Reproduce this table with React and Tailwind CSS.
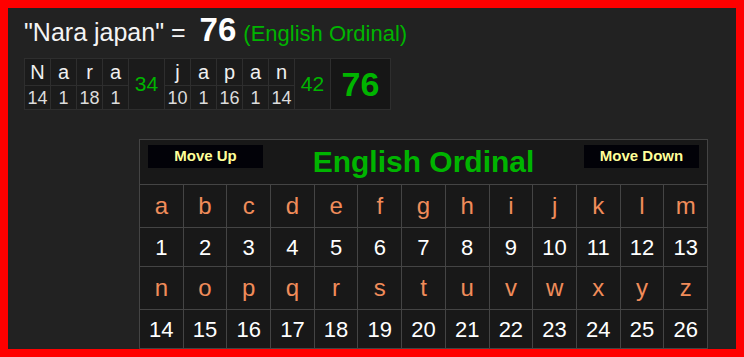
import React from "react";

const word1 = [["N", 14], ["a", 1], ["r", 18], ["a", 1]];
const word2 = [["j", 10], ["a", 1], ["p", 16], ["a", 1], ["n", 14]];
const letters = "abcdefghijklmnopqrstuvwxyz".split("");

function LetterCol({ l, n }) {
  return (
    <div className="flex w-[26px] flex-col border-r border-[#2e2e2e]">
      <div className="flex h-[27px] items-center justify-center border-b border-[#2e2e2e] text-[20px] text-[#f0f0f0]">
        {l}
      </div>
      <div className="flex h-[24px] items-center justify-center text-[18px] text-[#dcdcdc]">{n}</div>
    </div>
  );
}

function SumCol({ v }) {
  return (
    <div className="flex w-[36px] items-center justify-center border-r border-[#2e2e2e] text-[21px] text-[#00b400]">
      {v}
    </div>
  );
}

export default function App() {
  const rows = [letters.slice(0, 13), letters.slice(13)];
  return (
    <div
      className="box-border h-[357px] w-[744px] overflow-hidden border-8 border-[#ff0000] bg-[#222222]"
      style={{ fontFamily: '"Liberation Sans", Arial, sans-serif' }}
    >
      <div className="pl-[16px] pt-[3px]">
        <div className="flex items-baseline leading-[38px]">
          <span className="text-[25px] text-[#f4f4f4]">"Nara japan" =</span>
          <span className="ml-[14px] text-[33px] font-bold text-white">76</span>
          <span className="ml-[7px] text-[22px] text-[#00b400]">(English Ordinal)</span>
        </div>
        <div className="mt-[5px] flex h-[52px] w-fit border border-[#2e2e2e] bg-[#1b1b1b]">
          {word1.map(([l, n], i) => (
            <LetterCol key={"a" + i} l={l} n={n} />
          ))}
          <SumCol v={34} />
          {word2.map(([l, n], i) => (
            <LetterCol key={"b" + i} l={l} n={n} />
          ))}
          <SumCol v={42} />
          <div className="flex w-[59px] items-center justify-center bg-[#161616] text-[34px] font-bold text-[#00b400]">
            76
          </div>
        </div>

        <div className="ml-[115px] mt-[29px] w-[569px] border border-[#444444] bg-[#444444]">
          <div className="flex h-[44px] items-start justify-between bg-[#181818] px-[8px]">
            <div className="mt-[5px] flex h-[23px] w-[115px] items-center justify-center bg-[#020208] text-[15px] font-bold text-[#ffff99]">
              Move Up
            </div>
            <div className="self-center text-[30px] font-bold leading-none text-[#00b400]">English Ordinal</div>
            <div className="mt-[5px] flex h-[23px] w-[115px] items-center justify-center bg-[#020208] text-[15px] font-bold text-[#ffff99]">
              Move Down
            </div>
          </div>
          <div className="mt-px grid grid-cols-[repeat(13,minmax(0,1fr))] gap-px">
            {rows.map((row, ri) => (
              <React.Fragment key={ri}>
                {row.map((l) => (
                  <div
                    key={l}
                    className="flex h-[42px] items-center justify-center bg-[#181818] text-[24px] text-[#f08c5a]"
                  >
                    {l}
                  </div>
                ))}
                {row.map((l, i) => (
                  <div
                    key={l + "n"}
                    className="flex h-[38px] items-center justify-center bg-[#181818] text-[22px] text-white"
                  >
                    {ri * 13 + i + 1}
                  </div>
                ))}
              </React.Fragment>
            ))}
          </div>
        </div>
      </div>
    </div>
  );
}
